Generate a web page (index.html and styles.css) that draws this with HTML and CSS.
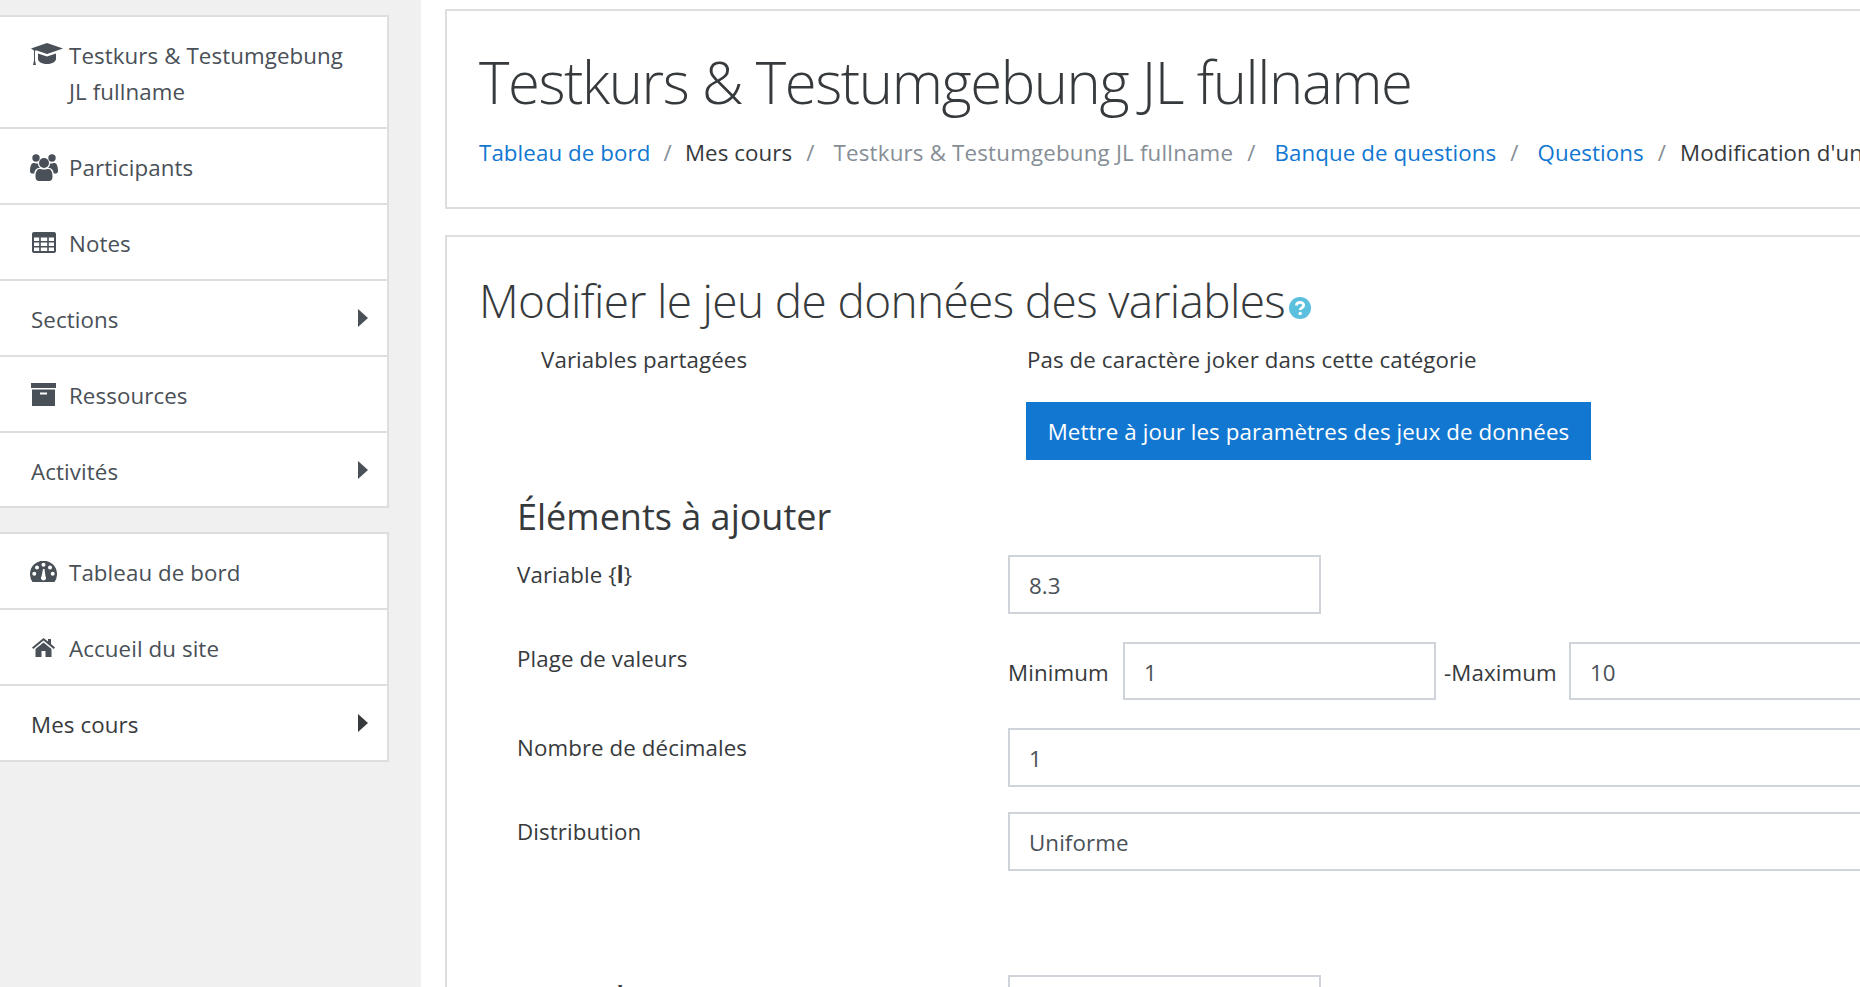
FILE: index.html
```html
<!DOCTYPE html>
<html lang="fr">
<head>
<meta charset="utf-8">
<title>Modifier le jeu de données des variables</title>
<link rel="stylesheet" href="styles.css">
</head>
<body>
<aside class="sidebar">
  <nav class="block">
    <a class="row row-tall"><svg class="icon icon-cap" width="32" height="23" viewBox="0 0 32 23"><path d="M16 0 32 5.500 16 11 5 7.300 4 8V17.500L5 22H2L3 17.500V7.500L0 5.500Z"/><path d="M7 10.500 16 13.500 25 10.500V16C25 19 20 21 16 21S7 19 7 16Z"/></svg><span class="label">Testkurs &amp; Testumgebung<br>JL fullname</span></a>
    <a class="row"><svg class="icon icon-users" width="28" height="27" viewBox="0 0 28 27"><circle cx="6" cy="4" r="3.700"/><circle cx="22" cy="4" r="3.700"/><circle cx="14" cy="9" r="5"/><path d="M8 15.500C9.500 14.500 11 15.500 14 15.500S18.500 14.500 20 15.500C22 16.500 22.500 20 22.500 23 22.500 25.500 21 27 19 27H9C7 27 5.500 25.500 5.500 23 5.500 20 6 16.500 8 15.500Z"/><path d="M3 9C4 8.500 6 10 8 9.500 8 11.500 9 13 10 14 6.500 14 4.500 16 4.300 19.500H2C.8 19.500 0 18.500 0 17 0 13 .8 10 3 9ZM25 9C24 8.500 22 10 20 9.500 20 11.500 19 13 18 14 21.500 14 23.500 16 23.700 19.500H26C27.200 19.500 28 18.500 28 17 28 13 27.200 10 25 9Z"/></svg><span class="label">Participants</span></a>
    <a class="row"><svg class="icon icon-table" width="24" height="21" viewBox="0 0 24 21"><path fill-rule="evenodd" d="M2 0H22C23.100 0 24 .9 24 2V19C24 20.100 23.100 21 22 21H2C.9 21 0 20.100 0 19V2C0 .9.9 0 2 0ZM2 5.500V9H7.200V5.500ZM8.800 5.500V9H15.200V5.500ZM16.800 5.500V9H22V5.500ZM2 10.500V14H7.200V10.500ZM8.800 10.500V14H15.200V10.500ZM16.800 10.500V14H22V10.500ZM2 15.500V19H7.200V15.500ZM8.800 15.500V19H15.200V15.500ZM16.800 15.500V19H22V15.500Z"/></svg><span class="label">Notes</span></a>
    <a class="row"><span class="label">Sections</span><svg class="caret" width="10" height="18" viewBox="0 0 10 18"><path d="M0 0 10 9 0 18Z"/></svg></a>
    <a class="row"><svg class="icon icon-box" width="25" height="23" viewBox="0 0 25 23"><path fill-rule="evenodd" d="M0 0H25V5H0ZM1 6.500H24V23H1ZM9 9.500V11.500H16V9.500Z"/></svg><span class="label">Ressources</span></a>
    <a class="row row-end"><span class="label">Activités</span><svg class="caret" width="10" height="18" viewBox="0 0 10 18"><path d="M0 0 10 9 0 18Z"/></svg></a>
  </nav>
  <nav class="block">
    <a class="row"><svg class="icon icon-gauge" width="27" height="21" viewBox="0 0 27 21"><path fill-rule="evenodd" d="M2.500 21A13.500 13.500 0 1 1 24.500 21ZM13.500 1.800A2 2 0 1 0 13.501 5.800 2 2 0 0 0 13.500 1.800ZM7 4.500A2 2 0 1 0 7.001 8.500 2 2 0 0 0 7 4.500ZM20 4.500A2 2 0 1 0 20.001 8.500 2 2 0 0 0 20 4.500ZM4.300 10.800A2 2 0 1 0 4.301 14.800 2 2 0 0 0 4.300 10.800ZM22.700 10.800A2 2 0 1 0 22.701 14.800 2 2 0 0 0 22.700 10.800ZM13 8 11.500 15.500A2.500 2.500 0 1 0 15.500 15.500L14.500 8Z"/></svg><span class="label">Tableau de bord</span></a>
    <a class="row"><svg class="icon icon-home" width="23" height="19" viewBox="0 0 23 19"><path d="M11.500 0 0 9.500 1.300 11 11.500 2.600 21.700 11 23 9.500 19 6V1H16V3.500Z"/><path d="M11.500 4.500 3.500 11V19H9.500V13H13.500V19H19.500V11Z"/></svg><span class="label">Accueil du site</span></a>
    <a class="row row-strong"><span class="label">Mes cours</span><svg class="caret" width="10" height="18" viewBox="0 0 10 18"><path d="M0 0 10 9 0 18Z"/></svg></a>
  </nav>
</aside>
<main class="content">
  <header class="card card-head">
    <h1 class="page-title">Testkurs &amp; Testumgebung JL fullname</h1>
    <ol class="crumbs">
      <li><a class="link">Tableau de bord</a></li>
      <li class="sep sep-first">/</li>
      <li>Mes cours</li>
      <li class="sep sep-wide">/</li>
      <li class="muted">Testkurs &amp; Testumgebung JL fullname</li>
      <li class="sep sep-wide">/</li>
      <li><a class="link">Banque de questions</a></li>
      <li class="sep sep-wide">/</li>
      <li><a class="link">Questions</a></li>
      <li class="sep">/</li>
      <li>Modification d'une question</li>
    </ol>
  </header>
  <section class="card card-body">
    <h2 class="section-title">Modifier le jeu de données des variables<svg class="help" width="22" height="22" viewBox="0 0 22 22"><circle cx="11" cy="11" r="11" fill="#5bc0de"/><path d="M7.500 8.500C7.500 6.500 9 5.300 11 5.300S14.700 6.500 14.700 8.300C14.700 10.800 11.200 10.800 11.200 13" fill="none" stroke="#fff" stroke-width="2.800"/><circle cx="11.200" cy="16.500" r="1.700" fill="#fff"/></svg></h2>
    <div class="shared">
      <span class="shared-label">Variables partagées</span>
      <div class="shared-value">
        <p class="shared-text">Pas de caractère joker dans cette catégorie</p>
        <button class="btn">Mettre à jour les paramètres des jeux de données</button>
      </div>
    </div>
    <h3 class="sub-title">Éléments à ajouter</h3>
    <div class="form-row">
      <span class="form-label">Variable {<b>l</b>}</span>
      <div class="field field-short">8.3</div>
    </div>
    <div class="form-row form-row-range">
      <span class="form-label">Plage de valeurs</span>
      <div class="range">
        <span class="range-min">Minimum</span>
        <div class="field field-short field-deep">1</div>
        <span class="range-max">-Maximum</span>
        <div class="field field-short field-deep">10</div>
      </div>
    </div>
    <div class="form-row">
      <span class="form-label">Nombre de décimales</span>
      <div class="field field-wide">1</div>
    </div>
    <div class="form-row form-row-last">
      <span class="form-label">Distribution</span>
      <div class="field field-wide">Uniforme</div>
    </div>
    <div class="form-row">
      <span class="form-label">Variable {<b>l</b>}</span>
      <div class="field field-short"></div>
    </div>
  </section>
</main>
</body>
</html>
```
FILE: styles.css
```css
* { box-sizing: border-box; }
html, body { margin: 0; height: 987px; overflow: hidden; }
body {
  display: flex;
  background: #fff;
  color: #373a3c;
  font-family: "Open Sans", "Noto Sans", sans-serif;
  font-size: 22.3px;
  letter-spacing: 0.1px;
}
svg { display: block; flex: none; fill: currentColor; }

.sidebar {
  flex: none;
  width: 421px;
  height: 987px;
  padding: 15px 32px 0 0;
  background: #f0f0f0;
}
.block {
  background: #fff;
  border: 2px solid #dedede;
  border-left: 0;
  margin-bottom: 24px;
}
.row {
  display: flex;
  align-items: center;
  height: 76px;
  padding-left: 31px;
  color: #495057;
  border-bottom: 2px solid #dedede;
}
.row:last-child { height: 74px; border-bottom: 0; }
.row.row-end { height: 73px; }
.row-tall { height: 112px; align-items: flex-start; padding-top: 21px; }
.row-strong { color: #373a3c; }
.label { flex: 1; padding-top: 4px; line-height: 36px; white-space: nowrap; }
.row-tall .label { padding-top: 0; }
.icon-cap { margin: 5px 6px 0 0; }
.icon-users { margin: 3px 11px 0 -1px; }
.icon-table { margin: 0 13px 0 1px; }
.icon-box { margin-right: 13px; }
.icon-gauge { margin: 0 12px 0 -1px; }
.icon-home { margin: 0 14px 0 1px; }
.caret { margin: 0 19px 0 0; }

.content {
  flex: 1;
  min-width: 0;
  padding: 9px 0 0 24px;
}
.card {
  width: 1500px;
  border: 2px solid #dedede;
  border-right: 0;
  background: #fff;
}
.card-head {
  height: 200px;
  margin-bottom: 26px;
  padding: 35px 0 0 32px;
}
.page-title {
  margin: 0;
  font-size: 58px;
  font-weight: 300;
  line-height: 72px;
  letter-spacing: -1.4px;
  white-space: nowrap;
}
.crumbs {
  display: flex;
  margin: 21px 0 0;
  padding: 0;
  list-style: none;
  white-space: nowrap;
  line-height: 28px;
}
.link { color: #1177d1; }
.muted { color: #868e96; letter-spacing: 0.2px; }
.sep { margin: 0 14px; color: #868e96; }
.sep-first { margin: 0 13px; }
.sep-wide { margin-right: 19px; }

.card-body { height: 760px; padding: 31px 0 0 32px; }
.section-title {
  display: flex;
  align-items: flex-end;
  margin: 0;
  font-size: 46px;
  font-weight: 300;
  line-height: 64px;
  letter-spacing: -0.65px;
  white-space: nowrap;
}
.help { margin: 0 0 13px 4px; }

.shared { display: flex; margin-top: 14px; }
.shared-label { width: 548px; padding-left: 62px; line-height: 28px; }
.shared-text { margin: 0; line-height: 28px; }
.btn {
  display: block;
  width: 565px;
  height: 58px;
  margin: 28px 0 0 -1px;
  padding: 0;
  border: 0;
  background: #1177d1;
  color: #fff;
  font: inherit;
  letter-spacing: inherit;
}
.sub-title {
  margin: 33px 0 0 38px;
  font-size: 36px;
  font-weight: 400;
  line-height: 48px;
  letter-spacing: 0;
  white-space: nowrap;
}
.form-row { display: flex; align-items: flex-start; margin: 0 0 25px 38px; }
.sub-title + .form-row { margin-top: 14px; }
.form-row-range { height: 64px; }
.form-row-last { margin-bottom: 104px; }
.form-label { width: 491px; flex: none; line-height: 28px; padding-top: 6px; }
.field {
  flex: none;
  height: 59px;
  padding: 15px 19px 0;
  border: 2px solid #ced4da;
  color: #495057;
  line-height: 28px;
}
.field-short { width: 313px; }
.field-deep { height: 58px; }
.field-wide { width: 1000px; }
.range { display: flex; align-items: flex-start; padding-top: 3px; }
.range-min { width: 115px; padding-top: 17px; line-height: 28px; }
.range-max { width: 133px; padding: 17px 0 0 8px; line-height: 28px; white-space: nowrap; }
```
